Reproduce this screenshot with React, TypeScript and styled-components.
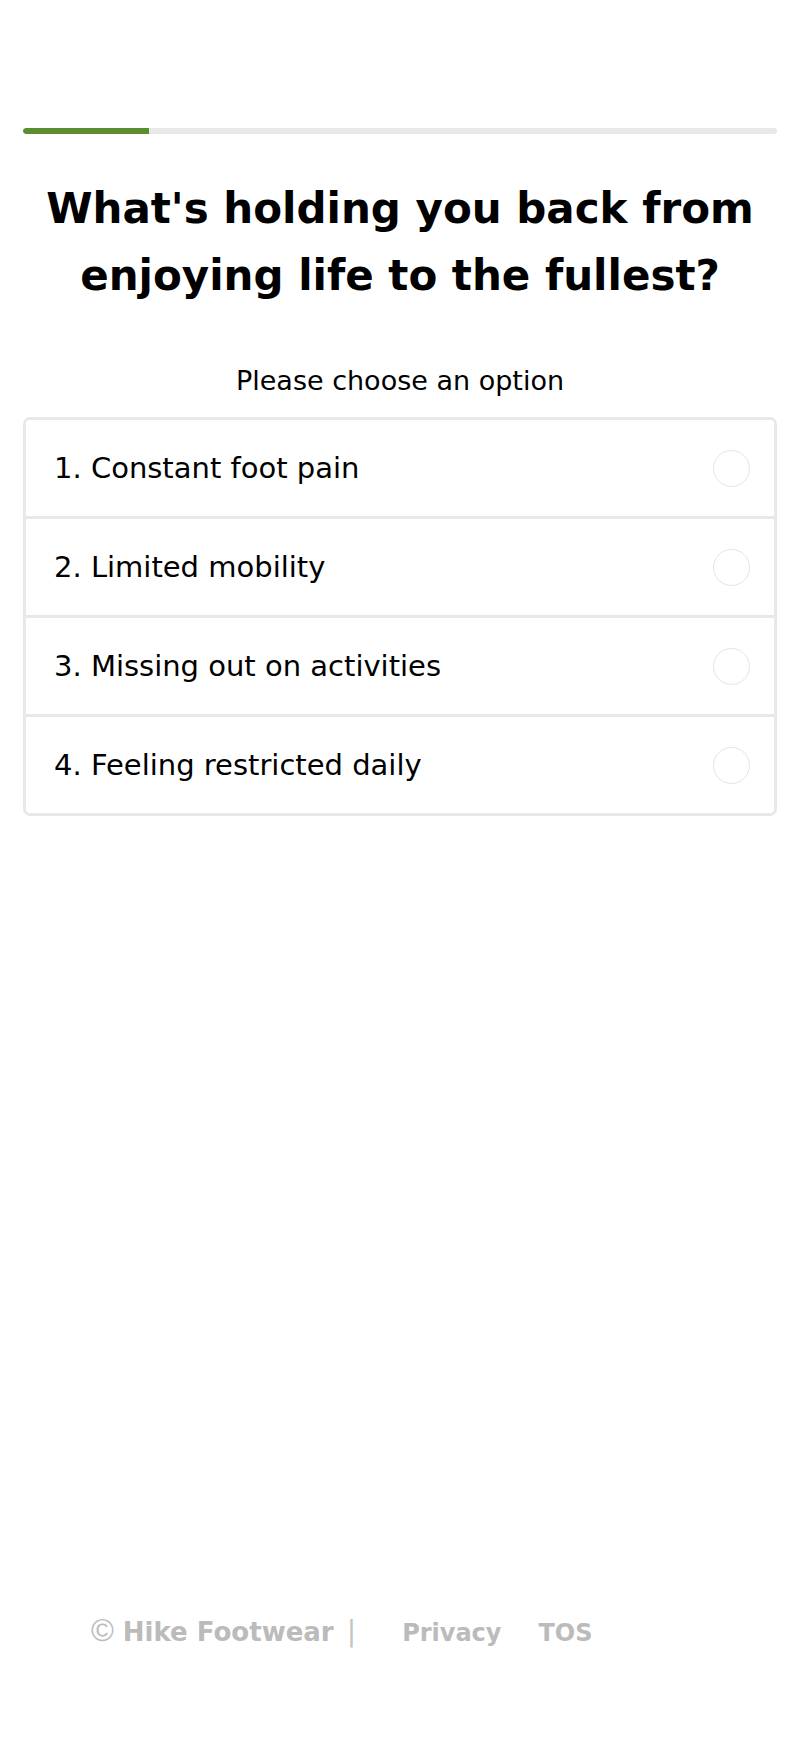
import React, { useState } from 'react'
import styled, { createGlobalStyle } from 'styled-components'

const GlobalStyle = createGlobalStyle`
  html, body {
    margin: 0;
    padding: 0;
    background: #ffffff;
  }
  body {
    font-family: "DejaVu Sans", Lato, sans-serif;
    color: #000000;
  }
  * {
    box-sizing: border-box;
  }
`

const options = [
  'Constant foot pain',
  'Limited mobility',
  'Missing out on activities',
  'Feeling restricted daily',
]

const Page = styled.div`
  min-height: 1751px;
  display: flex;
  flex-direction: column;
  padding: 128px 23px 0;
`

const Progress = styled.div`
  height: 6px;
  border-radius: 3px;
  background: #e8e8e8;
  overflow: hidden;
`

const ProgressFill = styled.div`
  height: 100%;
  background: #5b8c2f;
  border-radius: 3px 0 0 3px;
`

const Title = styled.h1`
  margin: 41px 0 0;
  font-size: 42px;
  line-height: 67px;
  font-weight: 700;
  text-align: center;
`

const Hint = styled.p`
  margin: 57px 0 0;
  font-size: 27px;
  font-weight: 400;
  text-align: center;
  line-height: 30px;
`

const Card = styled.div`
  margin-top: 21px;
  border: 3px solid #e8e8e8;
  border-radius: 7px;
  overflow: hidden;
`

const Row = styled.button<{ $first: boolean }>`
  display: flex;
  align-items: center;
  justify-content: space-between;
  width: 100%;
  height: ${(p) => (p.$first ? 96 : 99)}px;
  padding: 0 24px 0 28px;
  border: none;
  border-top: ${(p) => (p.$first ? 'none' : '3px solid #e8e8e8')};
  background: #ffffff;
  font-family: inherit;
  font-size: 29px;
  color: #000000;
  text-align: left;
  cursor: pointer;
`

const Radio = styled.span<{ $checked: boolean }>`
  width: 37px;
  height: 37px;
  border-radius: 50%;
  border: 1.5px solid #e4e4e4;
  background: ${(p) => (p.$checked ? '#5b8c2f' : '#ffffff')};
  flex-shrink: 0;
`

const Footer = styled.footer`
  margin-top: auto;
  display: flex;
  align-items: baseline;
  padding: 0 0 102px 68px;
  font-size: 26px;
  font-weight: 700;
  color: #bbbbbb;
`

const CopyMark = styled.span`
  font-family: "Liberation Sans", Arial, sans-serif;
  font-size: 31px;
  font-weight: 400;
  margin-right: 9px;
`

const Divider = styled.span`
  margin-left: 13px;
  font-weight: 400;
  font-size: 28px;
  color: #c4c4c4;
`

const FooterLink = styled.a<{ $gap: number }>`
  color: #bbbbbb;
  text-decoration: none;
  font-size: 24px;
  margin-left: ${(p) => p.$gap}px;
`

export default function App() {
  const [picked, setPicked] = useState<number | null>(null)
  const step = 1
  const total = 6

  return (
    <>
      <GlobalStyle />
      <Page>
        <Progress>
          <ProgressFill style={{ width: `${(step / total) * 100}%` }} />
        </Progress>
        <Title>
          What's holding you back from
          <br />
          enjoying life to the fullest?
        </Title>
        <Hint>Please choose an option</Hint>
        <Card>
          {options.map((text, i) => (
            <Row key={text} $first={i === 0} onClick={() => setPicked(i)}>
              <span>
                {i + 1}. {text}
              </span>
              <Radio $checked={picked === i} />
            </Row>
          ))}
        </Card>
        <Footer>
          <CopyMark>©</CopyMark>
          <span>Hike Footwear</span>
          <Divider>|</Divider>
          <FooterLink href="#" $gap={46}>Privacy</FooterLink>
          <FooterLink href="#" $gap={37}>TOS</FooterLink>
        </Footer>
      </Page>
    </>
  )
}
